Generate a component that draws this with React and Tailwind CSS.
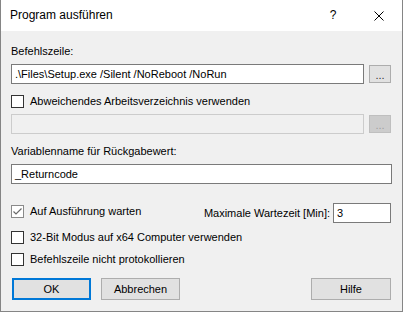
import React from "react";

function Box({ checked, muted }) {
  return (
    <div
      className={
        "w-[13px] h-[13px] shrink-0 bg-white border flex items-center justify-center " +
        (muted ? "border-[#8a8a8a]" : "border-[#333333]")
      }
    >
      {checked && (
        <svg width="11" height="11" viewBox="0 0 11 11">
          <polyline points="1.5,5.5 4,8 9.5,2.5" fill="none" stroke="#6a6a6a" strokeWidth="1.2" />
        </svg>
      )}
    </div>
  );
}

function Check({ label, checked, muted }) {
  return (
    <div className="flex items-center h-[13px]">
      <Box checked={checked} muted={muted} />
      <span className="ml-[6px] whitespace-nowrap">{label}</span>
    </div>
  );
}

function Btn({ children, primary, className = "" }) {
  return (
    <div
      className={
        "h-[22px] flex items-center justify-center bg-[#e1e1e1] " +
        (primary ? "border-2 border-[#0078d7] " : "border border-[#adadad] ") +
        className
      }
    >
      {children}
    </div>
  );
}

export default function App() {
  return (
    <div className="w-[403px] h-[312px] bg-[#f0f0f0] border-x border-b border-[#858585] flex flex-col font-['Liberation_Sans',Arial,sans-serif] text-[11px] leading-[13px] text-black overflow-hidden">
      {/* Title bar */}
      <div className="h-[31px] shrink-0 bg-white flex items-center pl-[9px] text-[12px]">
        <span>Program ausführen</span>
        <div className="ml-auto flex h-full">
          <div className="w-[46px] h-full flex items-center justify-center text-[12px]">?</div>
          <div className="w-[46px] h-full flex items-center justify-center">
            <svg width="10" height="10" viewBox="0 0 10 10">
              <path d="M0.5 0.5 L9.5 9.5 M9.5 0.5 L0.5 9.5" stroke="#000" strokeWidth="1" fill="none" />
            </svg>
          </div>
        </div>
      </div>

      {/* Content */}
      <div className="flex flex-col px-[10px] pt-[14px]">
        <div className="h-[13px]">Befehlszeile:</div>

        <div className="mt-[6px] flex items-center gap-[5px]">
          <div className="flex-1 h-[20px] border border-[#7a7a7a] bg-white pl-[3px] flex items-center whitespace-nowrap">
            .\Files\Setup.exe /Silent /NoReboot /NoRun
          </div>
          <div className="w-[22px] h-[18px] mr-[1px] bg-[#e1e1e1] border border-[#adadad] flex items-end justify-center pb-[2px] leading-[10px] text-[#333]">
            ...
          </div>
        </div>

        <div className="mt-[11px]">
          <Check label="Abweichendes Arbeitsverzeichnis verwenden" />
        </div>

        <div className="mt-[6px] flex items-center gap-[5px]">
          <div className="flex-1 h-[20px] border border-[#cccccc] bg-[#f0f0f0]"></div>
          <div className="w-[22px] h-[18px] mr-[1px] bg-[#cccccc] border border-[#bfbfbf] flex items-end justify-center pb-[2px] leading-[10px] text-[#a0a0a0]">
            ...
          </div>
        </div>

        <div className="mt-[11px] h-[13px]">Variablenname für Rückgabewert:</div>

        <div className="mt-[6px] h-[20px] border border-[#7a7a7a] bg-white pl-[3px] flex items-center">
          _Returncode
        </div>

        <div className="mt-[19px] h-[20px] flex items-start">
          <div className="mt-[2px]">
            <Check label="Auf Ausführung warten" checked muted />
          </div>
          <div className="ml-auto self-center whitespace-nowrap">Maximale Wartezeit [Min]:</div>
          <div className="ml-[3px] mr-[1px] w-[58px] h-[20px] border border-[#7a7a7a] bg-white pl-[3px] flex items-center">
            3
          </div>
        </div>

        <div className="mt-[8px]">
          <Check label="32-Bit Modus auf x64 Computer verwenden" />
        </div>
        <div className="mt-[9px]">
          <Check label="Befehlszeile nicht protokollieren" />
        </div>

        <div className="mt-[12px] flex pl-[1px]">
          <Btn primary className="w-[79px]">OK</Btn>
          <Btn className="w-[79px] ml-[10px]">Abbrechen</Btn>
          <Btn className="w-[80px] ml-auto mr-[1px]">Hilfe</Btn>
        </div>
      </div>
    </div>
  );
}
